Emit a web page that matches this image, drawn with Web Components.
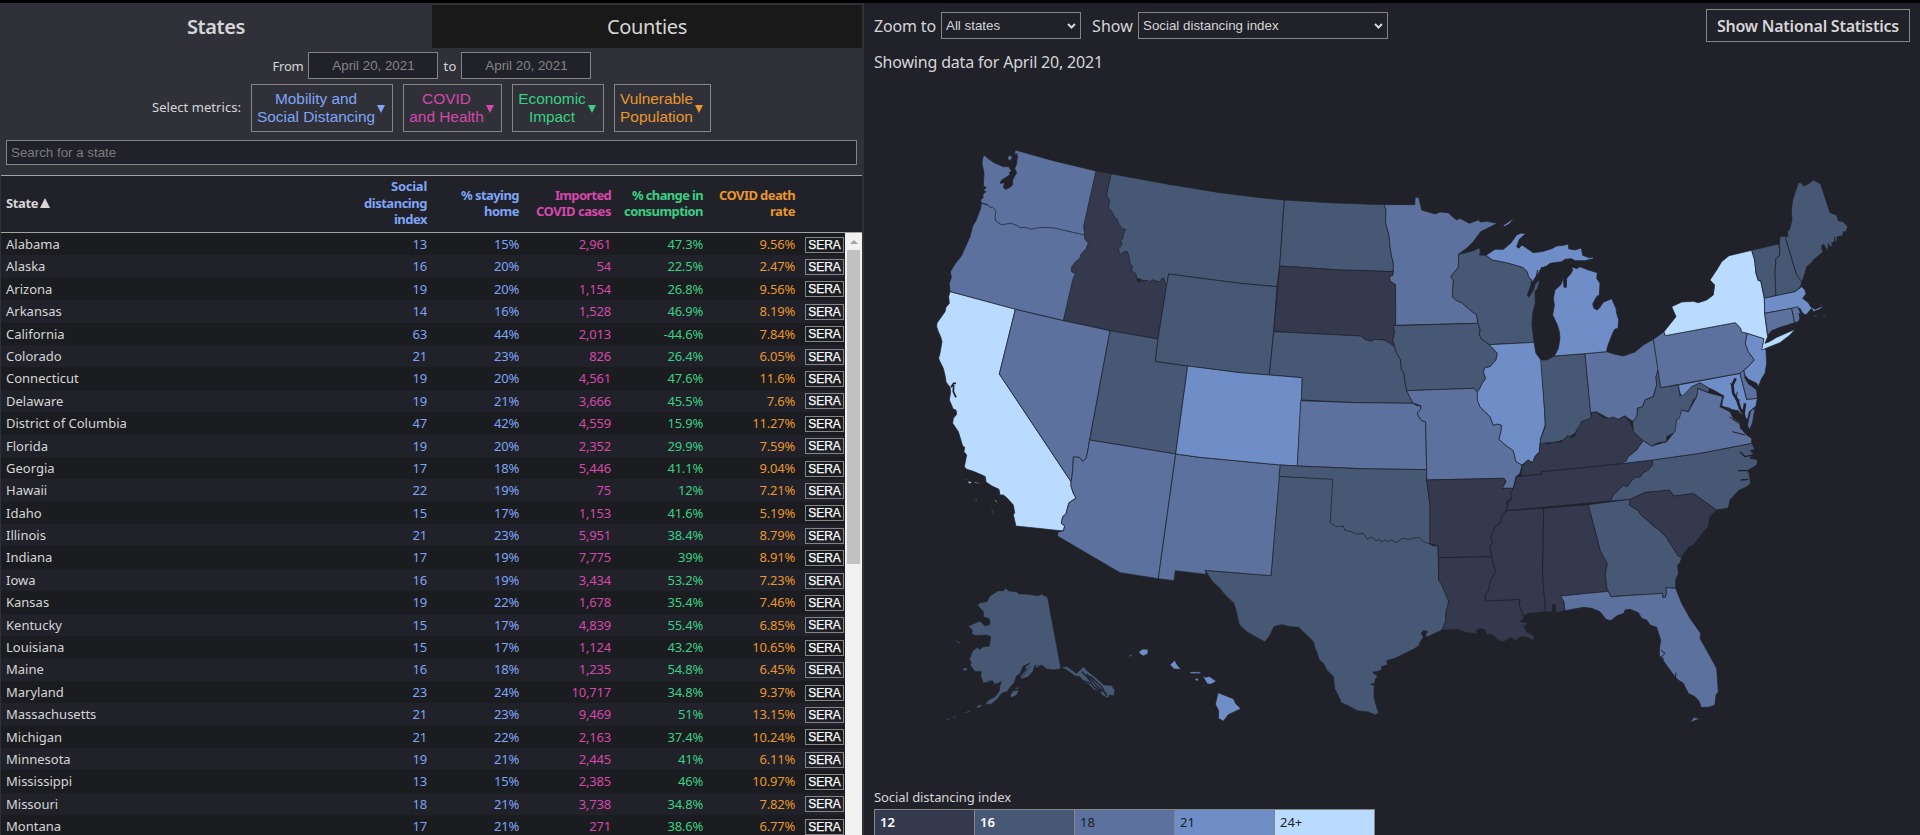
<!DOCTYPE html>
<html lang="en">
<head>
<meta charset="utf-8">
<title>COVID-19 Impact Analysis</title>
<style>
html,body{margin:0;height:100%;overflow:hidden;background:#202129}
body{font-family:"Noto Sans","Open Sans",sans-serif;color:#d6d6d6;font-size:13px}
</style>
</head>
<body>
<impact-app></impact-app>
<script>
const define=(name,html,init)=>customElements.define(name,class extends HTMLElement{
  connectedCallback(){
    if(this.shadowRoot)return;
    const root=this.attachShadow({mode:'open'});
    const t=document.createElement('template');
    t.innerHTML=html;
    root.append(t.content.cloneNode(true));
    if(init)init(this,root);
  }
});

/* Text whose tracking is adjusted so that it occupies a given width */
customElements.define('fit-text',class extends HTMLElement{
  connectedCallback(){
    if(this.shadowRoot)return;
    const root=this.attachShadow({mode:'open'});
    root.innerHTML='<style>:host{display:inline-block;white-space:nowrap}span{display:inline-block}</style><span></span>';
    const s=root.querySelector('span');
    const text=this.getAttribute('text');
    s.textContent=text;
    const w=+this.getAttribute('w');
    if(w){
      const gap=(w-s.getBoundingClientRect().width)/text.length;
      s.style.letterSpacing=gap.toFixed(3)+'px';
    }
  }
});

define('view-tabs',`<style>
:host{display:grid;grid-template-columns:432px 430px;height:42px;padding-top:2px;font-size:20px;text-align:center;line-height:43px}
.on{font-weight:600}.off{background:#191919}
</style><div class="on"><fit-text text="States" w="58"></fit-text></div><div class="off"><fit-text text="Counties" w="80"></fit-text></div>`);

define('date-range',`<style>
:host{display:flex;justify-content:center;align-items:center;gap:5px;height:27px;margin:5px 0 0 -44px;font-size:13px}
.in{box-sizing:border-box;width:130px;height:27px;border:1px solid #858585;background:#202129;color:#858585;font:13.33px/25px "Liberation Sans",Arial,sans-serif;text-align:center}
.row{display:flex;align-items:center;gap:5px;margin-left:44px}
</style><div class="row"><fit-text text="From" w="31"></fit-text><div class="in">April 20, 2021</div><fit-text text="to" w="13"></fit-text><div class="in">April 20, 2021</div></div>`);

define('metric-button',`<style>
:host{box-sizing:border-box;display:flex;align-items:center;justify-content:center;gap:2px;height:48px;border:1px solid #858585;padding-right:2px;font:15.4px/18px "Liberation Sans",Arial,sans-serif;text-align:center;white-space:nowrap}
i{width:0;height:0;border:4.5px solid transparent;border-top:8px solid currentColor;border-bottom:0;margin-top:2px}
</style><span><slot></slot></span><i></i>`);

define('metric-picker',`<style>
:host{display:flex;align-items:center;gap:10px;height:48px;margin:5px 0 0 152px}
.label{margin-top:-3px}
</style><fit-text class="label" text="Select metrics:" w="89"></fit-text>
<metric-button style="width:142px;color:#7fa4f5">Mobility and<br>Social Distancing</metric-button>
<metric-button style="width:99px;color:#d548ac">COVID<br>and Health</metric-button>
<metric-button style="width:92px;color:#3acf84">Economic<br>Impact</metric-button>
<metric-button style="width:97px;color:#e8962e">Vulnerable<br>Population</metric-button>`);

define('search-box',`<style>
:host{box-sizing:border-box;display:block;height:25px;margin:8px 7px 0 6px;border:1px solid #858585;background:#202129;color:#7b7b7b;padding-left:4px;font:13.33px/23px "Liberation Sans",Arial,sans-serif}
</style><slot></slot>`);

const rows=`Alabama|13|15%|2,961|47.3%|9.56%
Alaska|16|20%|54|22.5%|2.47%
Arizona|19|20%|1,154|26.8%|9.56%
Arkansas|14|16%|1,528|46.9%|8.19%
California|63|44%|2,013|-44.6%|7.84%
Colorado|21|23%|826|26.4%|6.05%
Connecticut|19|20%|4,561|47.6%|11.6%
Delaware|19|21%|3,666|45.5%|7.6%
District of Columbia|47|42%|4,559|15.9%|11.27%
Florida|19|20%|2,352|29.9%|7.59%
Georgia|17|18%|5,446|41.1%|9.04%
Hawaii|22|19%|75|12%|7.21%
Idaho|15|17%|1,153|41.6%|5.19%
Illinois|21|23%|5,951|38.4%|8.79%
Indiana|17|19%|7,775|39%|8.91%
Iowa|16|19%|3,434|53.2%|7.23%
Kansas|19|22%|1,678|35.4%|7.46%
Kentucky|15|17%|4,839|55.4%|6.85%
Louisiana|15|17%|1,124|43.2%|10.65%
Maine|16|18%|1,235|54.8%|6.45%
Maryland|23|24%|10,717|34.8%|9.37%
Massachusetts|21|23%|9,469|51%|13.15%
Michigan|21|22%|2,163|37.4%|10.24%
Minnesota|19|21%|2,445|41%|6.11%
Mississippi|13|15%|2,385|46%|10.97%
Missouri|18|21%|3,738|34.8%|7.82%
Montana|17|21%|271|38.6%|6.77%`.split('\n').map(r=>r.split('|'));

define('state-row',`<style>
:host{display:grid;grid-template-columns:334px 92px 92px 92px 92px 92px 49px;height:22.4px;line-height:22px;font-size:13px;letter-spacing:-.2px;white-space:nowrap}
span{text-align:right}.n{text-align:left;padding-left:5px;letter-spacing:0}
b{box-sizing:border-box;justify-self:end;align-self:center;width:39px;height:16px;margin-top:1px;border:1px solid #858585;color:#fff;font:12px/14px "Liberation Sans",Arial,sans-serif;letter-spacing:0;text-align:center;-webkit-text-stroke:.25px #fff}
</style>`,(host,root)=>{
  const colors=['','#7fa4f5','#7fa4f5','#d548ac','#3acf84','#e8962e'];
  host.cells.forEach((c,i)=>{
    const s=document.createElement('span');
    s.textContent=c;s.style.color=colors[i];
    if(!i)s.className='n';
    root.append(s);
  });
  const b=document.createElement('b');b.textContent='SERA';root.append(b);
});

define('state-table',`<style>
:host{display:flex;flex-direction:column;margin:10px 2px 0 1px;flex:1;min-height:0;background:#202129}
.head{box-sizing:border-box;display:grid;grid-template-columns:334px 92px 92px 92px 92px 92px;align-items:center;height:58px;padding-bottom:2px;border:solid #a3a3a3;border-width:1px 0;font-weight:700;font-size:13px;line-height:16.5px;text-align:right}
.head div{display:flex;flex-direction:column;align-items:flex-end}
.head .s{flex-direction:row;justify-content:flex-start;align-items:center;padding-left:5px;gap:2px}
.s i{width:0;height:0;border:5px solid transparent;border-bottom:10px solid currentColor;border-top:0}
.body{display:flex;flex:1;min-height:0;overflow:hidden}
.rows{flex:1}
state-row:nth-child(odd){background:#1b1c20}
.bar{width:17px;background:#f1f1f1;display:flex;flex-direction:column;align-items:center}
.bar i{margin:7px 0 6px;width:0;height:0;border:4px solid transparent;border-bottom:4px solid #a3a3a3;border-top:0}
.bar b{width:13px;height:314px;background:#c1c1c1}
</style>
<div class="head"><div class="s"><fit-text text="State" w="32"></fit-text><i></i></div>
<div style="color:#7fa4f5"><fit-text text="Social" w="36"></fit-text><fit-text text="distancing" w="63"></fit-text><fit-text text="index" w="33"></fit-text></div>
<div style="color:#7fa4f5"><fit-text text="% staying" w="58"></fit-text><fit-text text="home" w="35"></fit-text></div>
<div style="color:#d548ac"><fit-text text="Imported" w="56"></fit-text><fit-text text="COVID cases" w="75"></fit-text></div>
<div style="color:#3acf84"><fit-text text="% change in" w="71"></fit-text><fit-text text="consumption" w="79"></fit-text></div>
<div style="color:#e8962e"><fit-text text="COVID death" w="76"></fit-text><fit-text text="rate" w="25"></fit-text></div></div>
<div class="body"><div class="rows"></div><div class="bar"><i></i><b></b></div></div>`,(host,root)=>{
  const box=root.querySelector('.rows');
  rows.forEach(r=>{const e=document.createElement('state-row');e.cells=r;box.append(e)});
});

define('drop-down',`<style>
:host{box-sizing:border-box;display:flex;flex:none;align-items:center;justify-content:space-between;height:27px;border:1px solid #858585;padding:0 4px;font:13.33px "Liberation Sans",Arial,sans-serif;white-space:nowrap}
</style><slot></slot><svg width="9" height="6" viewBox="0 0 9 6" fill="none" stroke="#d6d6d6" stroke-width="2"><path d="M1 1l3.5 3.5L8 1"/></svg>`);

define('map-toolbar',`<style>
:host{display:flex;align-items:center;height:33px;padding:6px 10px 0 10px;font-size:16px}
.a{width:140px;margin:0 11px 0 5px}.b{width:250px;margin-left:5px}
.big{font-size:14.4px}
button{box-sizing:border-box;margin-left:auto;width:204px;height:33px;padding:0;border:1px solid #858585;background:none;color:#d6d6d6;font:600 16px/28px "Noto Sans",sans-serif}
</style><fit-text text="Zoom to" w="62"></fit-text><drop-down class="a">All states</drop-down><fit-text text="Show" w="41"></fit-text><drop-down class="b">Social distancing index</drop-down><button><fit-text text="Show National Statistics" w="182"></fit-text></button>`);

/* Outlines are given on third-of-a-pixel sheets; a lower-case letter selects the sheet origin, M opens a new ring */
const sheets={a:[0,0],b:[0,660],c:[960,120],d:[1740,90],e:[1740,840],f:[840,780],g:[0,1290]};
const trace=s=>{
  let o=[0,0],open=false,d='';
  for(const t of s.trim().split(/\s+/)){
    if(t==='M'){d+='Z';open=false}
    else if(sheets[t])o=sheets[t];
    else{const[x,y]=t.split(',').map(Number);d+=(open?'L':'M')+(x+o[0])+' '+(y+o[1]);open=true}
  }
  return d+'Z';
};
const shade={k:'#34394d',m:'#475875',n:'#5d719f',o:'#6f8dc6',p:'#b8dbff'};
const states=[
['m','a 573,101 740,132 900,158 c 60,53 133,60 119,258 111,320 0,310 a 746,402 740,435 720,440 640,410 590,340 580,270 550,200 555,165'],
['k','a 528,93 573,101 560,165 568,180 566,205 575,213 582,228 592,240 594,247 606,266 617,268 610,282 608,296 602,302 606,312 602,320 596,325 598,340 603,343 609,337 620,333 625,341 628,356 630,370 638,380 634,394 642,397 648,402 650,415 655,427 661,421 668,424 680,421 690,425 698,419 708,423 722,426 724,416 732,415 735,428 740,435 714,597 570,572 430,542 430,430 440,300 480,200'],
['n','a 184,188 228,200 485,240 494,285 494,296 505,310 498,326 482,344 480,354 466,366 454,382 455,396 462,398 465,404 458,420 456,428 430,542 286,508 90,455 88,430 94,412 91,395 105,372 124,348 150,290 158,258 168,242 182,205'],
['n','a 192,45 205,56 222,68 250,80 266,80 274,92 268,98 270,104 258,112 243,122 241,130 254,128 250,142 256,148 270,142 278,134 276,120 284,108 290,98 284,86 290,70 292,48 284,40 286,30 400,62 528,93 491,258 494,285 402,264 372,262 350,264 333,268 318,262 300,263 292,257 274,250 244,254 228,244 225,232 228,212 218,202 210,202 204,194 184,190 182,180 190,172 188,165 196,155 190,150 199,143 190,138 192,100 186,70 188,55 M 263,50 272,46 277,54 270,62 264,58'],
['p','a 90,455 286,508 238,702 b 453,365 453,378 460,400 468,414 447,428 442,445 438,462 428,470 424,490 434,498 430,513 287,498 286,490 280,465 284,458 280,435 262,415 250,405 240,405 237,388 216,378 198,366 196,350 186,345 160,334 140,328 133,320 140,285 132,275 134,262 128,258 115,215 98,190 100,175 110,163 108,150 100,148 88,120 92,95 90,82 78,66 76,50 70,25 60,5 a 56,655 60,640 66,605 62,590 55,575 50,560 51,549 75,515 78,502 88,490 86,470 M b 143,363 155,365 152,371 145,369 M 162,365 178,368 180,371 165,369 M 222,418 230,422 232,431 M 213,450 217,452 222,464 M 134,358 139,357 139,360 M 165,420 171,418 170,423'],
['n','a 286,508 430,542 570,572 b 509,240 502,280 498,295 488,304 478,292 460,291 458,330 456,350 453,365 a 238,702'],
['m','a 570,572 714,597 706,664 803,678 b 767,282 509,240'],
['n','b 509,240 767,282 715,656 600,638 412,528 415,515 430,513 434,498 424,490 428,470 438,462 442,445 447,428 468,414 460,400 453,378 453,365 456,350 458,330 460,291 478,292 488,304 498,295 502,280'],
['m','a 746,402 c 0,310 111,320 101,455 88,585 0,578 a 803,678 706,664 714,597 740,435'],
['m','f 237,229 400,235 420,300 600,350 690,432 700,438 714,437 716,540 722,546 730,565 746,600 744,620 738,635 737,665 726,690 690,707 680,712 676,705 683,694 670,692 664,700 670,712 658,730 660,735 640,748 585,775 560,782 562,794 545,800 545,810 530,815 518,816 534,828 526,838 524,850 512,853 524,857 522,870 522,890 528,915 536,938 526,945 505,936 472,932 450,920 424,908 416,890 404,866 400,830 380,810 370,790 358,780 350,755 345,745 340,725 330,715 296,682 270,680 245,674 222,680 210,705 195,726 180,718 140,695 118,674 110,640 102,610 75,585 55,560 40,548 15,511 213,527'],
['n','b 767,282 f 0,172 241,195 213,527 15,511 19,523 0,521 b 766,632 762,662 715,656'],
['m','c 133,60 283,69 433,74 438,90 437,130 447,165 450,200 454,225 460,250 460,275 300,270 119,258'],
['k','c 119,258 300,270 460,275 459,286 449,290 450,302 466,314 467,435 460,440 464,460 458,478 464,500 450,490 432,480 405,478 392,484 375,478 362,468 101,455'],
['m','c 101,455 362,468 375,478 392,484 405,478 432,480 450,490 464,500 470,520 482,540 484,568 492,580 495,608 500,632 510,650 518,670 350,668 184,660 186,593 88,585'],
['o','a 803,678 c 0,578 88,585 186,593 184,660 f 292,198 241,195 0,172 b 767,282'],
['n','f 302,2 470,8 638,10 652,17 663,18 662,28 652,38 655,48 665,62 677,66 680,209 480,206 292,198'],
['m','f 241,195 292,198 480,206 680,209 680,240 690,315 690,432 670,425 660,414 650,412 630,418 608,415 588,428 575,420 560,425 555,418 545,427 540,418 530,423 515,411 502,417 490,400 470,402 450,394 434,390 430,378 408,380 391,368 398,238 237,229'],
['n','c 433,74 524,74 526,50 537,54 545,90 565,96 585,102 600,96 625,98 635,108 650,120 660,115 688,130 715,120 722,126 740,124 772,130 722,155 700,185 680,205 656,222 655,262 632,290 640,300 637,350 650,362 665,368 690,390 710,405 714,430 467,436 467,314 450,302 449,290 459,286 460,275 460,250 454,225 450,200 447,165 437,130 438,90'],
['m','c 656,222 670,220 700,212 718,203 722,215 718,225 738,226 757,240 800,248 848,262 862,275 866,290 875,300 873,315 862,345 866,352 880,330 885,312 900,298 893,325 885,335 886,370 878,400 876,435 882,487 748,494 725,478 718,465 720,450 714,430 710,405 690,390 665,368 650,362 637,350 640,300 632,290 655,262'],
['m','c 460,437 714,430 720,450 718,465 725,478 748,494 772,520 768,540 750,560 735,563 730,575 737,595 727,610 718,628 712,636 702,625 500,632 495,608 492,580 484,568 482,540 470,520 464,500 458,478 464,460'],
['n','c 500,632 702,625 712,636 713,660 f 840,20 870,50 880,76 892,72 905,76 903,95 897,118 920,138 940,152 948,185 966,195 960,220 948,230 940,265 906,265 918,245 912,235 680,240 680,209 677,66 665,62 655,48 652,38 662,28 663,18 638,8'],
['o','c 748,494 882,487 888,520 905,543 d 134,725 136,765 e 122,55 118,95 105,110 98,128 84,120 66,135 f 948,185 940,152 920,138 897,118 903,95 905,76 892,72 880,76 870,50 840,20 832,0 c 712,636 718,628 727,610 737,595 730,575 735,563 750,560 768,540 772,520'],
['m','d 122,570 140,570 163,558 255,551 272,728 275,745 245,755 e 240,20 225,40 205,52 190,60 165,68 140,68 120,74 122,55 136,20 d 134,725'],
['n','d 255,551 320,545 345,553 370,558 405,546 430,525 460,508 476,600 468,620 470,645 460,680 435,690 428,710 412,715 412,735 402,755 392,750 375,738 355,748 325,745 290,726 272,728'],
['k','d 275,728 290,726 305,740 325,745 340,741 355,748 375,738 392,760 400,780 e 400,35 430,62 410,90 385,110 378,124 355,132 250,143 125,155 125,163 64,168 66,140 84,120 98,128 105,110 118,95 120,74 130,68 145,72 165,65 180,68 195,56 203,46 212,54 225,48 230,28 238,20 245,5 d 272,745'],
['k','f 680,240 912,235 918,245 906,265 940,265 932,280 935,295 920,305 922,325 905,350 900,370 885,380 872,410 878,425 869,440 876,470 716,473 714,437 690,432 690,315'],
['k','e 50,170 125,163 125,155 250,143 355,132 457,120 458,135 445,150 430,158 420,172 405,172 395,182 382,200 370,196 355,210 340,225 332,243 20,272 25,245 35,238 32,220 40,205'],
['k','f 716,473 876,470 879,490 888,515 870,545 866,570 856,585 856,603 958,598 958,615 972,655 960,665 985,668 972,680 980,695 1003,708 1000,722 980,712 962,710 945,722 932,712 918,722 905,726 890,718 885,710 870,702 860,705 855,690 840,685 828,695 835,702 800,698 770,688 740,690 726,690 737,665 738,635 746,605 730,565 716,540'],
['k','e 20,272 131,265 128,470 137,575 110,578 85,580 72,588 58,555 60,538 f 856,603 856,585 866,570 870,545 888,515 879,490 876,470 869,440 878,425 872,410 885,380 900,370 905,350 918,332'],
['k','e 131,265 265,254 302,395 322,430 316,462 320,500 325,514 182,528 192,545 195,572 168,578 165,553 158,553 157,576 137,575 128,470'],
['m','e 265,254 390,238 388,255 412,270 430,292 445,302 460,318 475,328 500,352 512,372 522,388 535,408 545,412 540,428 533,435 535,460 527,480 527,505 498,503 500,518 496,532 488,532 488,520 332,530 325,514 320,500 316,462 322,430 302,395'],
['n','e 182,528 325,514 332,530 488,520 488,532 496,532 500,518 498,503 527,505 545,550 570,595 602,640 600,655 625,700 650,745 655,815 648,825 646,855 625,862 603,862 598,845 585,830 565,820 550,790 535,780 525,770 510,750 490,722 478,705 478,690 482,660 470,622 450,615 440,600 425,595 415,578 390,568 375,570 372,580 350,588 332,602 318,598 300,575 275,565 250,562 195,572 192,545 M 570,907 582,892 600,896'],
['k','e 390,238 435,217 508,210 522,228 580,220 650,270 630,290 625,320 610,335 600,350 580,375 565,382 545,412 535,408 522,388 512,372 500,352 475,328 460,318 445,302 430,292 412,270 388,255'],
['m','e 332,243 340,225 355,210 370,196 382,200 395,182 405,172 420,172 430,158 445,150 458,135 457,120 600,100 755,70 765,88 750,92 760,100 750,115 775,120 770,135 745,150 748,165 752,190 740,200 715,212 690,240 685,264 650,270 580,220 522,228 508,210 435,217 390,238'],
['n','e 355,132 378,124 385,110 410,90 430,62 455,78 500,65 520,40 d 530,740 545,720 565,725 590,680 592,655 625,668 668,680 660,710 690,725 700,745 718,758 722,775 740,795 e 755,55 755,70 600,100 457,120 M d 752,722 765,715 757,760 748,780 742,765'],
['m','d 474,600 482,653 535,645 540,678 560,660 575,650 600,638 628,655 625,668 594,655 590,680 580,690 565,725 545,720 538,745 530,750 525,785 e 520,40 500,50 500,65 475,68 455,78 430,62 400,35 d 400,780 398,757 412,735 412,715 428,710 435,690 460,680 470,645 468,620'],
['o','d 535,645 720,610 740,688 772,685 768,708 748,725 742,750 728,738 715,722 690,718 665,708 668,690 672,678 640,660 628,655 600,638 575,650 548,678 540,670'],
['n','d 720,610 732,598 733,615 745,640 770,660 772,685 740,688'],
['n','d 460,508 492,485 496,497 706,458 722,475 725,486 742,490 736,520 745,545 763,570 745,590 732,600 720,610 482,653'],
['o','d 742,490 792,506 788,530 798,540 800,580 795,610 785,625 775,650 770,640 745,628 734,615 732,600 745,590 763,570 745,545 736,520'],
['p','d 492,485 528,440 515,410 545,396 580,394 595,398 620,390 640,375 644,345 630,330 650,300 665,275 687,257 755,241 764,270 768,310 775,332 782,332 793,385 794,430 803,500 795,520 808,515 830,502 885,478 870,495 840,518 795,536 785,540 792,506 742,490 725,486 722,475 706,458 496,497'],
['m','d 755,241 835,222 840,240 838,258 828,265 825,310 828,377 793,385 782,332 775,332 768,310 764,270'],
['m','d 838,222 840,200 855,198 890,315 905,335 902,350 885,365 828,377 825,310 828,265 838,258 840,240'],
['m','d 855,198 864,200 862,185 868,180 876,150 874,120 878,90 895,38 903,38 910,48 925,42 940,30 962,42 990,128 1010,135 1015,152 1030,155 1043,170 1038,185 1030,185 1028,198 1012,200 1010,212 995,218 998,232 985,225 985,245 970,222 965,235 970,245 940,270 935,278 920,290 915,310 908,330 905,335 890,315'],
['o','d 793,385 828,377 885,365 905,350 915,360 918,372 908,385 925,398 932,410 945,418 965,410 957,395 968,410 960,418 940,425 935,415 918,435 908,430 900,415 875,415 794,430 M 936,440 950,435 948,440 M 965,440 975,437 974,442'],
['n','d 794,430 875,415 884,458 860,466 840,472 815,482 803,496'],
['n','d 875,415 893,410 900,425 905,435 895,455 884,458 M 898,430 902,448 906,432'],
['o','c 738,226 765,208 790,208 812,190 830,165 842,160 858,160 838,178 830,200 836,205 846,195 865,208 880,218 910,214 935,206 950,198 970,196 d 205,222 206,236 225,240 244,234 248,256 270,264 278,260 280,266 255,272 225,272 215,266 195,268 185,275 150,280 135,292 125,292 112,315 95,338 c 875,300 866,290 862,275 848,262 800,248 757,240 M 790,136 822,115 808,132 792,140'],
['o','d 215,290 230,296 240,290 265,300 292,308 290,325 300,340 298,375 290,380 278,402 282,415 292,420 300,412 310,397 335,386 348,415 350,430 356,450 354,475 344,478 338,490 328,515 322,532 320,545 255,551 163,558 175,535 180,505 178,485 172,465 158,435 163,405 160,385 165,360 182,345 190,325 192,352 199,352 200,325 212,312 218,300'],
['m','g 172,105 180,98 200,95 210,78 222,70 235,62 250,62 258,54 265,62 290,66 298,72 320,72 355,77 365,72 383,82 423,296 400,300 380,297 365,285 350,295 345,285 340,302 325,320 305,328 300,320 318,298 315,290 330,280 310,288 300,312 290,318 282,340 270,352 262,365 245,370 232,388 215,402 195,404 205,390 225,380 238,362 240,345 245,335 222,345 218,332 205,336 190,340 182,318 184,305 165,305 150,285 154,278 148,268 158,242 172,232 178,238 190,230 208,228 212,200 200,195 165,197 155,190 157,180 145,168 180,153 195,168 210,163 208,147 190,140 190,125'],
['m','g 423,292 440,289 470,310 480,300 490,290 505,305 530,325 552,345 575,346 585,362 582,378 568,375 565,385 545,375 538,362 522,360 508,345 490,335 480,320 465,318 440,300 M 95,206 108,210 122,219 116,221 108,212 M 125,295 142,293 142,301 133,303 M 270,375 280,362 297,360 290,375 275,384 M 165,412 178,404 190,406 175,414 M 133,428 148,421 151,425 137,430 M 97,442 108,438 105,445 M 70,452 86,444 88,449 M 280,356 298,350 294,358'],
['o','g 656,245 668,237 684,238 684,251 670,258 660,252 M 625,261 633,253 636,257 M 750,284 764,271 772,285 783,298 762,297 M 809,305 842,306 842,311 812,311 M 825,324 836,326 834,334 826,331 M 847,317 857,322 868,319 889,334 873,343 862,342 M 847,347 853,345 852,350 M 894,368 940,386 948,402 963,416 925,434 910,454 895,445 896,422 886,403']
];
/* bays, sounds and channels: narrow dark water over land */
const water=[
[4,'a 291,40 288,70 276,80 284,96 274,112 M 266,112 246,128 256,124 M 282,105 272,138 256,146'],
[2,'a 198,145 190,146 M 200,155 190,157 M 204,196 182,187'],
[5,'b 93,82 101,70 108,70 M 101,75 100,95 108,112'],
[8,'d 707,625 697,645 700,670 712,690 720,715 732,735 735,755 748,795 M 735,700 730,735 742,760'],
[3,'d 690,640 700,650 M 665,710 690,715 710,735 M 688,740 715,760 M 697,785 735,795 M 712,665 708,690 720,690'],
[7,'d 735,620 748,640 772,652'],
[4,'e 720,95 735,110 768,103 M 765,85 775,130 765,160 M 714,152 745,152 760,165 M 722,180 745,178'],
[3,'e 482,690 495,700 485,710 492,720 M 528,758 526,775 M 650,830 645,855'],
[3,'c 893,270 880,325 M 915,258 900,300 M 970,265 975,320'],
[4,'g 485,305 505,325 520,350 545,365 M 500,312 530,348 560,372 M 510,318 545,350 560,378 M 485,330 510,340'],
[3,'f 665,700 675,710 M 828,690 850,692 M 520,818 535,830'],
[3,'d 965,225 970,245 M 985,220 985,240 M 1005,200 1002,225 M 897,430 902,452'],
[2,'g 188,150 210,158 M 300,330 330,288 M 350,285 375,295 M 205,330 235,345']
];
define('us-map',`<style>:host{display:block;height:720px}svg{display:block}</style><svg width="1056" height="720" viewBox="864 70 1056 720"><g transform="translate(920 140) scale(.333333)" stroke-linejoin="round"></g></svg>`,(host,root)=>{
  const g=root.querySelector('g'),ns='http://www.w3.org/2000/svg';
  const add=(d,a)=>{const p=document.createElementNS(ns,'path');p.setAttribute('d',d);for(const k in a)p.setAttribute(k,a[k]);g.append(p)};
  for(const[c,s]of states)add(trace(s),{fill:shade[c],stroke:'#20232c','stroke-width':2.2});
  for(const[w,s]of water)add(trace(s).replace(/Z/g,''),{fill:'none',stroke:'#202129','stroke-width':w});
});

define('map-legend',`<style>
:host{display:block;margin-left:10px}
.bins{display:grid;grid-template-columns:repeat(5,100px);border-left:1px solid #858585;margin-top:3px}
.bins span{box-sizing:border-box;border:solid #858585;border-width:1px 1px 0 0;height:30px;padding-left:5px;line-height:24px;font-size:13px}
</style><fit-text text="Social distancing index" w="137"></fit-text>
<div class="bins"><span style="background:#34394d;color:#fff;font-weight:600">12</span><span style="background:#475875;color:#fff;font-weight:600">16</span><span style="background:#5d719f;color:#202129">18</span><span style="background:#6f8dc6;color:#202129">21</span><span style="background:#b8dbff;color:#202129">24+</span></div>`);

define('impact-app',`<style>
:host{box-sizing:border-box;display:grid;grid-template-columns:864px 1fr;height:835px;border-top:3px solid #000;overflow:hidden}
aside{display:flex;flex-direction:column;min-height:0;background:#303138}
main{display:flex;flex-direction:column;min-width:0;min-height:0}
.date{flex:none;height:22px;margin:9px 0 0 10px;font-size:16px;line-height:22px}
us-map{flex:none;margin-top:-3px}
map-legend{margin-top:-2px}
</style><aside><view-tabs></view-tabs><date-range></date-range><metric-picker></metric-picker><search-box>Search for a state</search-box><state-table></state-table></aside>
<main><map-toolbar></map-toolbar><div class="date"><fit-text text="Showing data for April 20, 2021" w="229"></fit-text></div><us-map></us-map><map-legend></map-legend></main>`);
</script>
</body>
</html>
